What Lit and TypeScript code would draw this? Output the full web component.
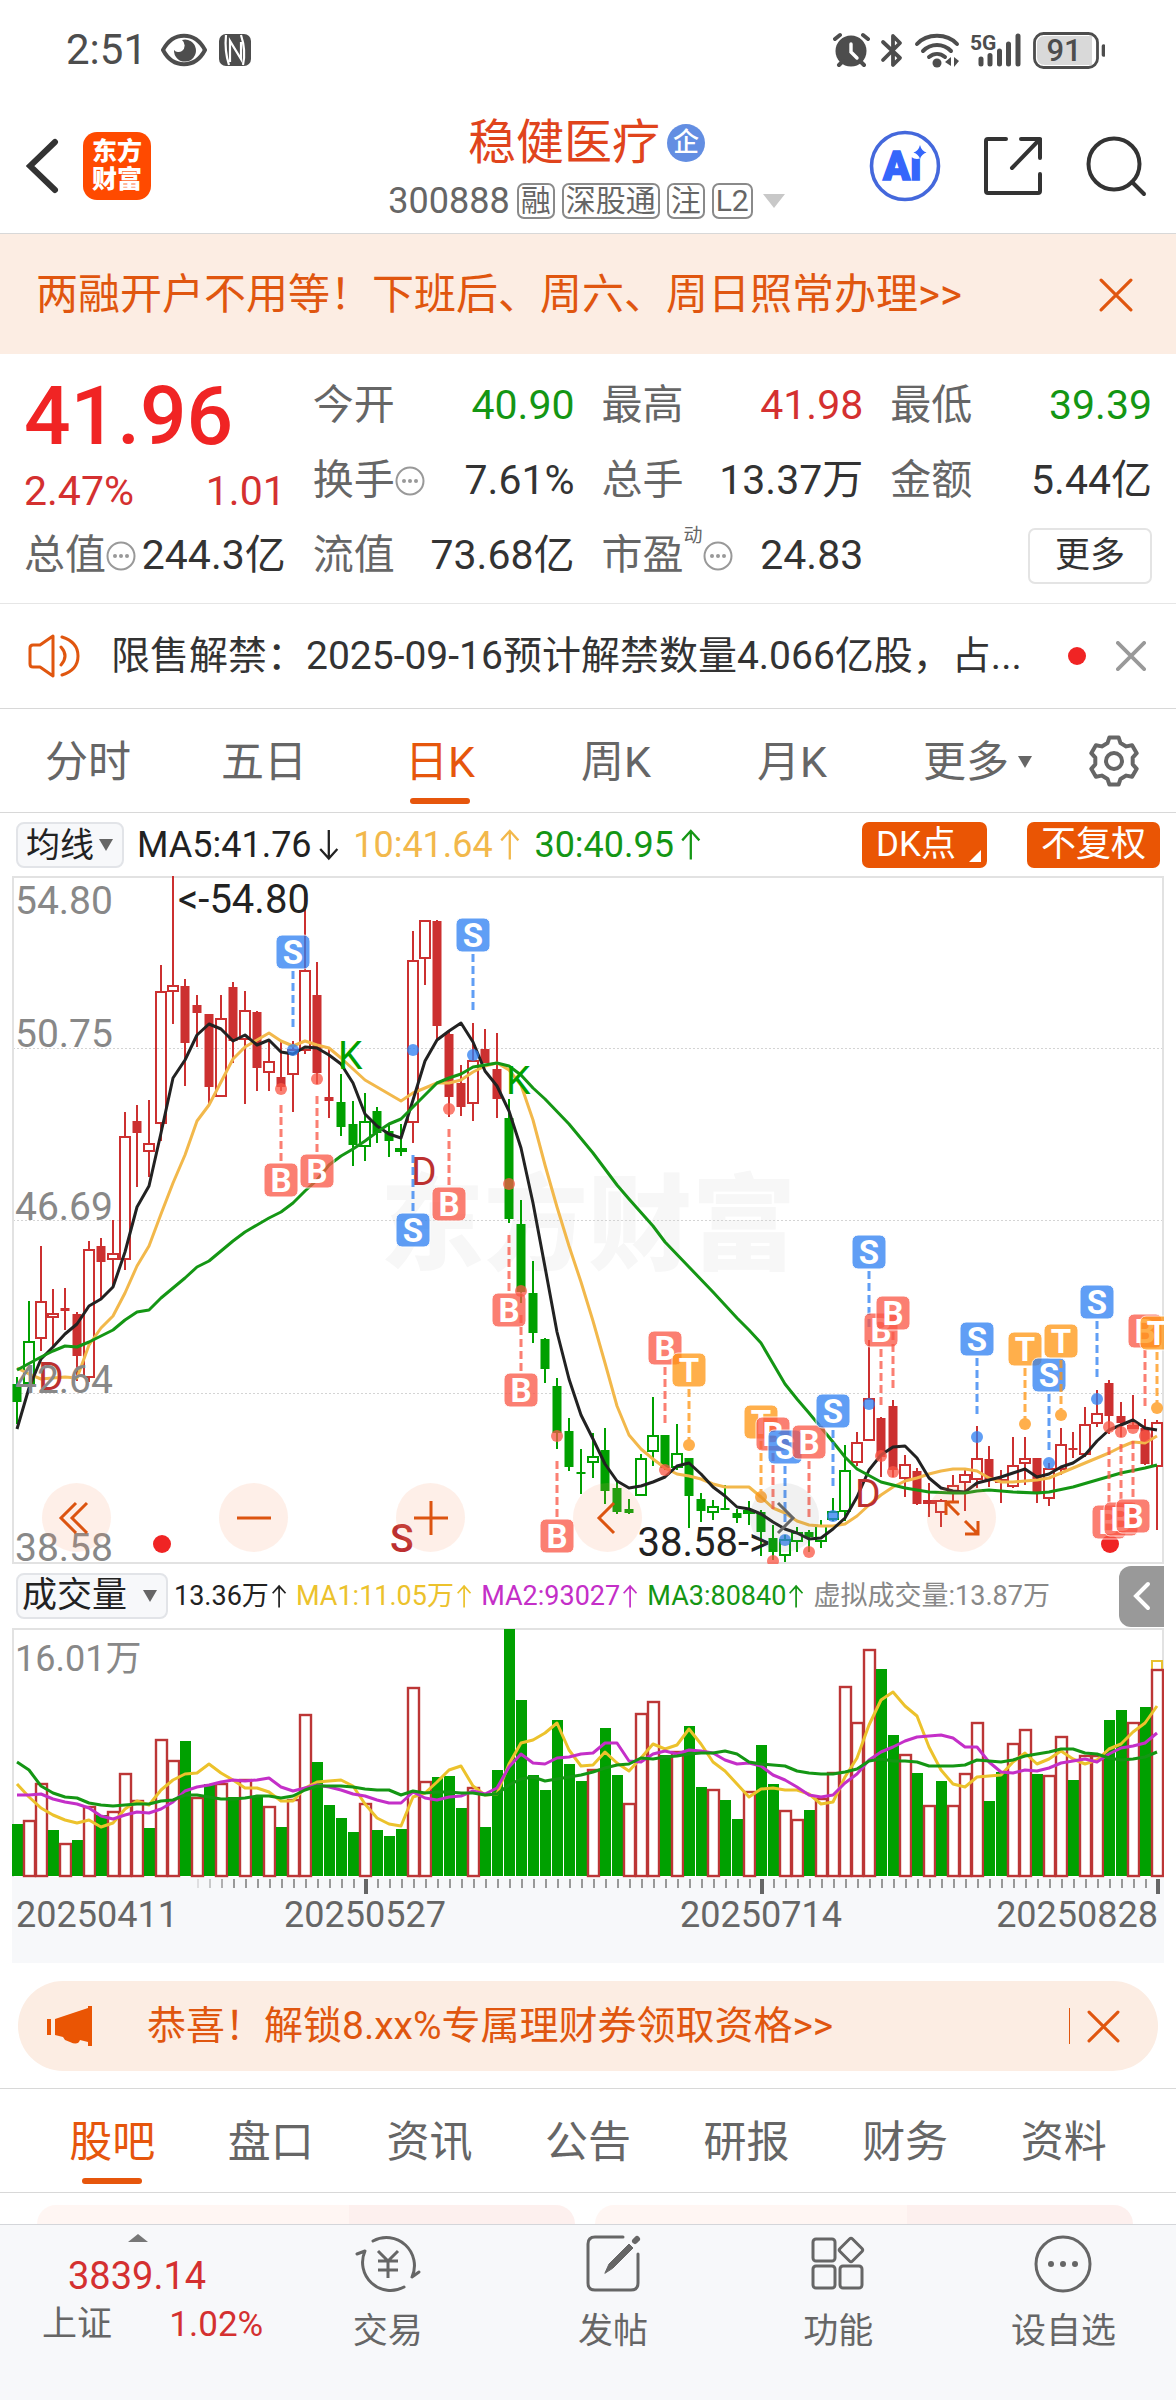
import { LitElement, html, svg, css } from "lit";
import { customElement, state } from "lit/decorators.js";
import { classMap } from "lit/directives/class-map.js";

/* ---------- data ---------- */

type Kind = "r" | "h" | "g" | "u"; // red solid, red hollow, green solid, green hollow
type Candle = [Kind, number, number, number, number]; // kind, high, top, bottom, low

const CANDLES: Candle[] = [
  ["g", 507, 514, 532, 554], ["u", 431, 471, 514, 514], ["h", 376, 431, 469, 481], ["h", 419, 443, 448, 476],
  ["r", 418, 438, 441, 460], ["r", 442, 444, 486, 511], ["h", 371, 379, 508, 512], ["r", 368, 376, 392, 429],
  ["h", 350, 383, 390, 415], ["h", 242, 266, 390, 400], ["r", 235, 251, 263, 317], ["h", 230, 273, 282, 307],
  ["h", 95, 121, 254, 271], ["h", 6, 115, 122, 154], ["r", 109, 116, 173, 216], ["r", 125, 135, 143, 177],
  ["r", 144, 144, 217, 234], ["h", 125, 148, 227, 227], ["r", 112, 117, 171, 193], ["h", 121, 140, 170, 234],
  ["r", 141, 142, 198, 221], ["h", 172, 191, 203, 221], ["r", 172, 207, 217, 221], ["h", 171, 179, 205, 242],
  ["h", 19, 100, 181, 184], ["r", 92, 125, 203, 214], ["r", 178, 227, 231, 248], ["g", 204, 232, 257, 266],
  ["g", 231, 254, 275, 296], ["u", 223, 251, 277, 291], ["g", 237, 241, 263, 273], ["g", 254, 261, 271, 287],
  ["u", 254, 278, 282, 286], ["h", 61, 90, 253, 273], ["h", 50, 50, 89, 115], ["r", 50, 51, 156, 169],
  ["r", 161, 164, 227, 247], ["r", 195, 213, 237, 246], ["h", 153, 190, 234, 251], ["r", 159, 179, 193, 193],
  ["r", 163, 199, 229, 248], ["g", 229, 248, 349, 353], ["g", 330, 354, 422, 433], ["g", 391, 423, 463, 473],
  ["g", 468, 469, 499, 513], ["g", 508, 516, 563, 579], ["g", 548, 561, 597, 601], ["g", 579, 602, 604, 624],
  ["u", 563, 586, 593, 608], ["g", 558, 580, 621, 634], ["g", 612, 618, 642, 644], ["g", 629, 639, 643, 644],
  ["u", 584, 588, 626, 626], ["u", 527, 565, 582, 596], ["g", 565, 565, 598, 600], ["u", 554, 583, 598, 600],
  ["g", 588, 588, 626, 658], ["g", 623, 629, 641, 652], ["u", 630, 636, 643, 650], ["g", 615, 638, 640, 640],
  ["g", 639, 643, 648, 653], ["u", 631, 640, 643, 655], ["g", 640, 642, 662, 686], ["g", 655, 668, 682, 690],
  ["u", 665, 669, 686, 692], ["u", 657, 662, 672, 682], ["g", 660, 662, 667, 682], ["u", 650, 655, 672, 678],
  ["u", 628, 641, 650, 651], ["u", 575, 600, 642, 651], ["h", 562, 572, 593, 596], ["h", 470, 528, 571, 571],
  ["r", 547, 548, 587, 607], ["r", 530, 536, 600, 607], ["h", 585, 594, 609, 627], ["r", 598, 601, 634, 635],
  ["h", 613, 630, 634, 647], ["h", 629, 630, 643, 657], ["h", 605, 615, 622, 632], ["h", 598, 604, 613, 641],
  ["h", 556, 588, 610, 618], ["r", 576, 589, 610, 617], ["h", 600, 609, 612, 633], ["h", 567, 595, 617, 618],
  ["h", 567, 588, 594, 615], ["r", 588, 588, 623, 633], ["h", 593, 598, 629, 636], ["h", 558, 574, 600, 605],
  ["r", 562, 578, 580, 588], ["h", 537, 554, 585, 587], ["h", 520, 543, 554, 557], ["r", 510, 513, 546, 564],
  ["r", 532, 546, 553, 567], ["h", 525, 555, 557, 558], ["r", 549, 558, 594, 595], ["h", 550, 552, 597, 660],
];

const MA5 = [
  559, 518, 489, 477, 464, 454, 436, 429, 417, 382, 337, 316, 263, 208, 190, 165, 154, 159, 171, 165, 175, 170, 182,
  184, 177, 178, 185, 194, 213, 244, 256, 264, 268, 230, 191, 170, 161, 153, 172, 201, 216, 241, 278, 333, 397, 462,
  509, 545, 569, 594, 611, 618, 616, 612, 607, 596, 593, 604, 617, 626, 637, 639, 644, 652, 659, 663, 669, 668, 659,
  648, 627, 600, 585, 577, 576, 588, 608, 618, 621, 622, 613, 610, 607, 603, 599, 607, 604, 597, 593, 585, 571, 560,
  555, 550, 558, 560,
];
const MA10 = [
  498, 504, 509, 508, 507, 508, 475, 458, 446, 423, 396, 376, 344, 313, 285, 251, 235, 212, 189, 177, 170, 163, 171,
  176, 171, 175, 178, 188, 199, 210, 217, 224, 231, 223, 218, 213, 213, 210, 202, 196, 193, 200, 215, 250, 295, 337,
  376, 412, 451, 493, 536, 565, 579, 589, 598, 604, 606, 609, 614, 617, 617, 617, 627, 638, 643, 651, 655, 656, 656,
  654, 646, 635, 625, 617, 611, 608, 604, 601, 599, 599, 601, 608, 612, 612, 611, 610, 608, 603, 598, 593, 588, 583,
  577, 572, 573, 566,
];
const MA30: [number, number][] = [
  [0, 500], [2, 487], [3, 481], [4, 476], [5, 477], [6, 472], [8, 460], [9, 450], [10, 442], [11, 440], [12, 428],
  [14, 408], [15, 397], [16, 391], [18, 371], [19, 362], [20, 355], [21, 348], [22, 342], [23, 333], [24, 321],
  [25, 310], [26, 295], [27, 286], [28, 279], [29, 271], [30, 262], [31, 254], [32, 249], [33, 237], [34, 225],
  [35, 213], [36, 208], [37, 204], [38, 197], [39, 195], [40, 193], [41, 196], [42, 205], [43, 218], [44, 229],
  [46, 254], [48, 283], [50, 315], [51, 329], [53, 356], [54, 372], [56, 397], [58, 422], [60, 448], [61, 460],
  [62, 473], [64, 514], [65, 529], [66, 543], [68, 572], [69, 587], [70, 599], [72, 612], [74, 618], [76, 622],
  [78, 623], [79, 623], [80, 621], [81, 620], [83, 622], [85, 623], [86, 622], [88, 617], [90, 610], [92, 603],
  [94, 598], [95, 595],
];

type Signal = ["B" | "S" | "T", number, number, number]; // letter, day, badge y, dot y
const SIGNALS: Signal[] = [
  ["S", 23, 82, 180], ["B", 22, 310, 219], ["B", 25, 301, 209], ["S", 33, 360, 180], ["S", 38, 65, 185],
  ["B", 36, 334, 239], ["B", 41, 440, 314], ["B", 42, 520, 421], ["B", 45, 666, 566], ["B", 54, 478, 600],
  ["T", 56, 500, 575], ["T", 62, 552, 627], ["B", 63, 564, 691], ["S", 64, 577, 670], ["B", 66, 572, 682],
  ["S", 68, 541, 646], ["S", 71, 382, 534], ["B", 72, 460, 586], ["B", 73, 443, 602], ["S", 80, 469, 567],
  ["T", 84, 479, 554], ["S", 86, 505, 593], ["T", 87, 471, 545], ["S", 90, 432, 529], ["B", 91, 652, 557],
  ["B", 92, 649, 562], ["B", 93, 646, 558], ["B", 94, 461, 566], ["T", 95, 463, 538],
];

const VOLUMES = [
  53, 57, 94, 47, 34, 37, 71, 62, 66, 104, 77, 49, 138, 117, 136, 80, 93, 94, 80, 98, 81, 71, 50, 78, 163, 115, 72,
  59, 45, 74, 47, 41, 48, 190, 96, 100, 101, 69, 90, 50, 107, 248, 177, 102, 87, 157, 113, 96, 108, 149, 102, 74,
  164, 176, 122, 126, 151, 90, 88, 77, 58, 86, 132, 93, 67, 58, 67, 79, 105, 191, 155, 228, 208, 142, 123, 104, 72,
  96, 72, 104, 155, 76, 105, 134, 148, 103, 102, 141, 97, 122, 122, 157, 167, 155, 170, 208,
];
const VOLUME_UP = new Set([
  1, 2, 4, 6, 8, 9, 10, 12, 13, 15, 17, 19, 21, 23, 24, 29, 33, 34, 38, 48, 51, 52, 53, 55, 58, 61, 64, 65, 67, 68,
  69, 70, 71, 74, 76, 78, 79, 80, 83, 84, 86, 87, 89, 90, 93, 95,
]);

/* ---------- helpers ---------- */

const dayX = (i: number) => 17 + 12 * i;

const linePoints = (ys: number[]) => ys.map((y, i) => `${dayX(i)},${y}`).join(" ");

/** Moving average whose first values come from days before the visible range. */
function average(values: number[], span: number, seed: number[]): number[] {
  return values.map((_, i) =>
    i < span - 1 ? seed[i] : values.slice(i - span + 1, i + 1).reduce((a, b) => a + b, 0) / span,
  );
}

function gearPath(): string {
  const pts: string[] = [];
  for (let t = 0; t < 6; t++) {
    const steps: [number, number][] = [[-20, 19], [-11, 24], [11, 24], [20, 19]];
    for (const [da, r] of steps) {
      const a = ((t * 60 - 90 + da) * Math.PI) / 180;
      pts.push(`${(28 + r * Math.cos(a)).toFixed(1)} ${(28 + r * Math.sin(a)).toFixed(1)}`);
    }
  }
  return `M${pts.join("L")}Z`;
}

const cross = (size: number, width: number) => html`<svg width=${size} height=${size} viewBox="0 0 32 32" fill="none"
  stroke="currentColor" stroke-width=${width} stroke-linecap="round" aria-hidden="true"><path d="M2 2 30 30M30 2 2 30"/></svg>`;
const info = html`<svg width="30" height="30" viewBox="0 0 30 30" aria-hidden="true"><circle cx="15" cy="15" r="13.5"
  fill="none" stroke="#999" stroke-width="2"/><g fill="#999"><circle cx="9" cy="15" r="2"/><circle cx="15" cy="15" r="2"/><circle
  cx="21" cy="15" r="2"/></g></svg>`;
const caret = html`<svg width="16" height="14" viewBox="0 0 16 14" aria-hidden="true"><path d="M1 1h14L8 13Z" fill="#666"/></svg>`;
const arrow = (down = false) => html`<svg class="arrow" viewBox="0 0 22 34" fill="none" stroke="currentColor"
  stroke-width="2.4" role="img" aria-label=${down ? "下降" : "上升"}><path d=${
  down ? "M11 2V32M2 22 11 32 20 22" : "M11 33V3M2 13 11 3 20 13"}/></svg>`;

const base = css`
  * { box-sizing: border-box; }
  button, select { font: inherit; color: inherit; background: none; border: 0; padding: 0; margin: 0; cursor: pointer; }
  a { color: inherit; text-decoration: none; }
  svg { display: block; flex: none; }
`;

/* ---------- price chart ---------- */

@customElement("price-chart")
export class PriceChart extends LitElement {
  static styles = [base, css`
    :host { display: block; position: relative; }
    .plot { width: 100%; height: auto; }
    .controls { position: absolute; left: 30px; bottom: 12px; display: flex; gap: 108px; }
    .ctl { width: 69px; height: 69px; border-radius: 50%; background: rgba(250, 150, 100, 0.15); color: #dc5410;
      display: grid; place-items: center; }
    .ctl.off { background: rgba(120, 120, 120, 0.1); color: #666; }
    text { font-family: Roboto, "Noto Sans CJK SC", sans-serif; }
    .axis { fill: #888; font-size: 39px; }
    .note { fill: #222; font-size: 40px; }
    .mark { font-size: 39px; }
    .badge { fill: #fff; font-size: 33px; font-weight: 700; text-anchor: middle; }
    .water { fill: #f7f7f7; font-size: 104px; font-weight: 900; }
  `];

  private candle([kind, high, top, bottom, low]: Candle, i: number) {
    const x = dayX(i);
    const color = kind === "r" || kind === "h" ? "#cc3030" : "#00a000";
    const hollow = kind === "h" || kind === "u";
    return svg`
      <path d="M${x} ${high}V${top}M${x} ${bottom}V${low}" stroke=${color} stroke-width="2"/>
      ${hollow
        ? svg`<rect x=${x - 5} y=${top + 1} width="10" height=${Math.max(bottom - top - 2, 2)} fill="none" stroke=${color} stroke-width="2"/>`
        : svg`<rect x=${x - 4.5} y=${top} width="9" height=${Math.max(bottom - top, 2)} fill=${color}/>`}`;
  }

  private signal([letter, day, y, dot]: Signal) {
    const x = dayX(day);
    const color = { B: "#fa5746", S: "#2f80f2", T: "#ff9614" }[letter];
    const dir = dot > y ? 1 : -1;
    return svg`<g opacity="0.76">
      <path d="M${x} ${y + 19 * dir}V${y + 75 * dir}" stroke=${color} stroke-width="3" stroke-dasharray="8 4"/>
      <circle cx=${x} cy=${dot} r="6" fill=${color}/>
      <rect x=${x - 17} y=${y - 17} width="34" height="34" rx="6" fill=${color} stroke="#fff"/>
      </g><text class="badge" x=${x} y=${y + 12}>${letter}</text>`;
  }

  render() {
    const rows: [string, number][] = [["54.80", 44], ["50.75", 177], ["46.69", 350], ["42.64", 523], ["38.58", 691]];
    const ctl = (label: string, d: string, off = false) => html`<button class=${classMap({ ctl: true, off })}
      aria-label=${label}><svg width="40" height="40" viewBox="0 0 40 40" fill="none" stroke="currentColor"
      stroke-width="3"><path d=${d}/></svg></button>`;
    return html`
      <svg class="plot" viewBox="12 6 1152 688" role="img" aria-label="日K线图">
        <text class="water" x="380" y="392">东方财富</text>
        <g stroke="#d4d4d4" stroke-dasharray="2 2">
          <path d="M13 178.5H1163M13 350.5H1163M13 523.5H1163"/>
        </g>
        <rect x="13" y="7" width="1150" height="686" fill="none" stroke="#e2e2e2" stroke-width="2"/>
        ${CANDLES.map((c, i) => this.candle(c, i))}
        <g fill="none" stroke-width="3" stroke-linejoin="round">
          <polyline points=${linePoints(MA10)} stroke="#f2b84b"/>
          <polyline points=${linePoints(MA5)} stroke="#222"/>
          <polyline points=${MA30.map(([i, y]) => `${dayX(i)},${y}`).join(" ")} stroke="#149614"/>
        </g>
        <g class="mark" fill="#00a000"><text x="338" y="199">K</text><text x="506" y="224">K</text></g>
        <g class="mark" fill="#bc3030">
          <text x="38" y="520">D</text><text x="411" y="315">D</text><text x="855" y="637">D</text>
          <text x="390" y="682" font-weight="500">S</text>
        </g>
        ${rows.map(([t, y]) => svg`<text class="axis" x="15" y=${y}>${t}</text>`)}
        <text class="note" x="178" y="43">&lt;-54.80</text>
        <text class="note" x="770" y="686" text-anchor="end">38.58-&gt;</text>
        <g fill="#f02424"><circle cx="162" cy="674" r="9"/><circle cx="1110" cy="674" r="9"/></g>
        ${SIGNALS.map((s) => this.signal(s))}
      </svg>
      <div class="controls">
        ${ctl("快退", "M19 5 4 20 19 35M30 5 15 20 30 35")}
        ${ctl("缩小", "M3 20H37")}
        ${ctl("放大", "M3 20H37M20 3V37")}
        ${ctl("左移", "M26 5 11 20 26 35")}
        ${ctl("右移", "M13 5 28 20 13 35", true)}
        ${ctl("全屏", "M4 17V4H17M4 4 17 17M36 23V36H23M36 36 23 23")}
      </div>`;
  }
}

/* ---------- volume chart ---------- */

@customElement("volume-chart")
export class VolumeChart extends LitElement {
  static styles = [base, css`
    :host { display: block; }
    .plot { width: 100%; height: auto; }
    text { font-family: Roboto, "Noto Sans CJK SC", sans-serif; font-size: 36px; }
    .max { fill: #888; }
    .date { fill: #666; }
  `];

  render() {
    const floor = 317;
    const toLine = (v: number[]) => linePoints(v.map((h) => Math.round(floor - h)));
    const ma5 = average(VOLUMES, 5, [93, 80, 69, 62]);
    const ma10 = average(VOLUMES, 10, [82, 82, 83, 78, 75, 73, 69, 61, 58]);
    const ma20 = average(VOLUMES, 20, [115, 107, 91, 84, 80, 79, 74, 72, 71, 72, 73, 73, 76, 77, 82, 82, 80, 78, 78]);
    const major = new Set([29, 62, 95]);
    return html`<svg class="plot" viewBox="12 68 1152 335" role="img" aria-label="成交量图">
      <rect x="12" y="317" width="1152" height="86" fill="#f7f8fa"/>
      <path d="M13 317V69H1163V317" fill="none" stroke="#e2e2e2" stroke-width="2"/>
      <rect x="1152" y="101" width="10" height="10" fill="none" stroke="#e8c12e" stroke-width="2"/>
      ${VOLUMES.map((h, i) => VOLUME_UP.has(i)
        ? svg`<rect x=${dayX(i) - 5} y=${floor - h + 1} width="11" height=${h - 2} fill="#fff" stroke="#bc3636" stroke-width="2.400"/>`
        : svg`<rect x=${dayX(i) - 5} y=${floor - h} width="11" height=${h - 1} fill="#00a000"/>`)}
      <g fill="none" stroke-width="3" stroke-linejoin="round">
        <polyline points=${toLine(ma5)} stroke="#ecc22c"/>
        <polyline points=${toLine(ma10)} stroke="#c42fc8"/>
        <polyline points=${toLine(ma20)} stroke="#149614"/>
      </g>
      ${VOLUMES.map((_, i) => i < 15 ? "" : svg`<path d="M${dayX(i) + 1} 319V${major.has(i) ? 334 : 328}"
        stroke=${major.has(i) ? "#666" : "#999"} stroke-width=${major.has(i) ? 4 : 2} opacity=${Math.min(1, (i - 14) / 4)}/>`)}
      <text class="max" x="15" y="111">16.01万</text>
      <g class="date">
        <text x="16" y="367">20250411</text>
        <text x="365" y="367" text-anchor="middle">20250527</text>
        <text x="761" y="367" text-anchor="middle">20250714</text>
        <text x="1158" y="367" text-anchor="end">20250828</text>
      </g>
    </svg>`;
  }
}

/* ---------- page ---------- */

@customElement("app-root")
export class AppRoot extends LitElement {
  static styles = [base, css`
    :host { display: flex; flex-direction: column; min-height: 100vh; background: #fff; color: #333;
      font-family: Roboto, "Noto Sans CJK SC", sans-serif; font-size: 40px; line-height: 1; }
    .grow { flex: 1; }

    .status { height: 99px; padding: 0 71px 0 66px; display: flex; align-items: center; color: #4d4d4d; font-size: 42px; }
    .status .time { margin-right: 14px; }
    .status .nfc { margin-left: 12px; }

    .top { height: 135px; border-bottom: 1px solid #d8d8d8; display: grid; grid-template-columns: 1fr auto 1fr;
      align-items: center; padding: 0 29px 0 26px; color: #333; }
    .left { display: flex; align-items: center; gap: 24px; }
    .right { display: flex; align-items: center; gap: 42px; justify-content: flex-end; }
    .logo { width: 68px; height: 68px; border-radius: 14px; background: #ff4a00; color: #fff; font-size: 25px;
      line-height: 28px; font-weight: 900; text-align: center; padding-top: 6px; }
    .title { display: flex; flex-direction: column; align-items: center; gap: 14px; padding-top: 4px; }
    .name { margin: 0; display: flex; align-items: center; gap: 7px; font-size: 48px; line-height: 52px; font-weight: 400; color: #e0441c; }
    .corp { width: 38px; height: 38px; border-radius: 50%; background: #638ee2; color: #fff; font-size: 26px; line-height: 36px;
      text-align: center; font-weight: 500; }
    .code { display: flex; align-items: center; gap: 7px; font-size: 36px; line-height: 36px; color: #666; }
    .tag { border: 2px solid #8a8a8a; border-radius: 7px; height: 36px; padding: 0 2px; font-size: 30px; line-height: 31px; }
    .code svg { margin-left: 3px; }

    .banner { height: 120px; background: #fcede3; color: #e0560f; display: flex; align-items: center;
      justify-content: space-between; padding: 2px 43px 0 36px; font-size: 42px; }

    .quote { display: grid; grid-template-columns: repeat(4, 1fr); grid-auto-rows: 75px; column-gap: 27px;
      padding: 14px 24px 10px; border-bottom: 1px solid #e6e6e6; font-size: 41px; }
    .last { grid-row: span 2; color: #f02424; }
    .price { font-size: 82px; line-height: 96px; font-weight: 500; }
    .delta { display: flex; justify-content: space-between; line-height: 54px; color: #d43030; }
    .cell { display: flex; align-items: center; white-space: nowrap; }
    .cell .label { color: #666; }
    .cell .value { margin-left: auto; }
    .cell sup { font-size: 19px; line-height: 19px; align-self: flex-start; color: #666; margin-top: 8px; }
    .up { color: #d43030; }
    .down { color: #149614; }
    .more { margin-left: auto; width: 124px; height: 56px; border: 2px solid #e4e4e4; border-radius: 7px; font-size: 35px; }

    .notice { height: 105px; display: flex; align-items: center; padding: 0 30px 0 28px; border-bottom: 1px solid #d8d8d8; font-size: 39px; }
    .notice .text { flex: 1; margin-left: 31px; white-space: nowrap; overflow: hidden; line-height: 60px; }
    .dot { width: 18px; height: 18px; border-radius: 50%; background: #f02424; margin-right: 30px; }
    .gray { color: #999; }

    .periods { height: 104px; display: grid; grid-template-columns: repeat(5, 176fr) 196fr 100fr;
      border-bottom: 1px solid #d8d8d8; color: #666; font-size: 43px; }
    .tab { position: relative; display: flex; align-items: center; justify-content: center; gap: 8px; padding-top: 3px; }
    .tab.on { color: #e6560c; }
    .tab.on::after { content: ""; position: absolute; bottom: 8px; left: calc(50% - 30px); width: 60px; height: 6px;
      border-radius: 3px; background: #e6560c; }
    .gear { display: flex; align-items: center; justify-content: center; padding-right: 24px; color: #666; }

    .charts { padding: 0 12px; }
    .bar { height: 63px; display: flex; align-items: center; white-space: nowrap; }
    .pick { display: flex; align-items: center; height: 46px; padding: 0 8px; border: 2px solid #e2e4e8; border-radius: 8px;
      background: #f7f8fa; color: #222; font-size: 34px; margin-left: 4px; gap: 4px; }
    .pick select { appearance: none; outline: none; line-height: 40px; height: 42px; }
    .ma { display: flex; align-items: center; gap: 14px; margin-left: 13px; font-size: 36px; color: #222; }
    .ma span { display: flex; align-items: center; gap: 6px; }
    .arrow { height: 0.9em; width: 0.6em; }
    .y { color: #f2b84b; } .g { color: #149614; } .v { color: #c42fc8; } .y2 { color: #ecc22c; } .k { color: #888; }
    .chip { position: relative; height: 46px; border-radius: 7px; background: #ea5504; color: #fff; font-size: 35px; padding: 0 14px; margin-left: auto; }
    .chip.dk { padding-right: 31px; }
    .chip.dk::after { content: ""; position: absolute; right: 6px; bottom: 6px; border: 6px solid; border-color: transparent #fff #fff transparent; }
    .chip.adj { margin: 0 4px 0 40px; }
    .vol { height: 64px; }
    .vol .pick { gap: 14px; padding-left: 4px; font-size: 35px; }
    .vol .ma { margin-left: 6px; gap: 9px; font-size: 27px; }
    .vol .ma span { gap: 2px; }
    .fold { margin-left: auto; width: 45px; height: 61px; border-radius: 12px 0 0 12px; background: #999; color: #fff;
      display: grid; place-items: center; }

    .pill { margin: 18px 18px 17px; height: 90px; border-radius: 45px; background: #fcede3; color: #e0560f; display: flex;
      align-items: center; padding: 0 38px 0 28px; font-size: 39px; }
    .pill a { margin-left: 53px; flex: 1; }
    .rule { width: 1px; height: 36px; background: #e0560f; margin-right: 17px; }

    .sections { height: 105px; padding: 0 33px; display: grid; grid-template-columns: repeat(7, 1fr); border: solid #d8d8d8;
      border-width: 1px 0; color: #666; font-size: 43px; }

    .peek { display: grid; grid-template-columns: 1fr 1fr; gap: 20px; padding: 12px 43px 0 37px; }
    .card { height: 19px; border-radius: 24px 24px 0 0; background: linear-gradient(90deg, #fff6f3 58%, #fdf0ee 58%); }

    .nav { flex: 1; background: #f7f8fa; border-top: 1px solid #d4d6da; display: grid;
      grid-template-columns: 275fr repeat(4, 225fr); color: #666; font-size: 35px; }
    .nav button { display: flex; flex-direction: column; align-items: center; padding-top: 9px; gap: 20px; }
    .nav .index { padding: 9px 12px 0 42px; gap: 0; align-items: stretch; color: #d43030; }
    .index svg { margin-left: 86px; }
    .index strong { font-weight: 400; font-size: 38px; line-height: 38px; margin: 15px 0 0 26px; text-align: left; }
    .index span { display: flex; justify-content: space-between; align-items: center; margin-top: 10px; line-height: 40px; }
    .index em { font-style: normal; color: #666; }
  `];

  @state() private period = "日K";
  @state() private section = "股吧";

  private statusBar() {
    return html`<div class="status">
      <span class="time">2:51</span>
      <svg width="46" height="34" viewBox="0 0 46 34" fill="none"><path d="M2 17C12-2 34-2 44 17 34 36 12 36 2 17Z"
        stroke="#4d4d4d" stroke-width="4"/><path d="M21 7A11 11 0 1 1 13 17 6 6 0 0 0 21 18 7 7 0 0 0 21 7Z" fill="#4d4d4d"/></svg>
      <svg class="nfc" width="32" height="32" viewBox="0 0 32 32"><rect width="32" height="32" rx="7" fill="#4d4d4d"/>
        <path d="M7 1C6 11 7 22 10 31M22 1C25 10 26 22 24 31M11 28V7L22 25V8" stroke="#fff" stroke-width="2.2" fill="none"/></svg>
      <span class="grow"></span>
      <svg width="272" height="40" viewBox="832 29 272 40" fill="none" stroke="#4d4d4d" stroke-linecap="round" role="img" aria-label="5G 91%">
        <circle cx="850" cy="50" r="15.5" fill="#4d4d4d" stroke="none"/>
        <path d="M834 38 839 34M867 38 862 34M838 64 842 60M863 64 859 60" stroke-width="4"/>
        <path d="M850 43V51L856 57" stroke="#fff" stroke-width="3.4"/>
        <path d="M882 41 899 57 892 64V35L899 42 882 59" stroke-width="3.8" stroke-linejoin="round"/>
        <path d="M916 43C926 32 946 32 956 43M922 50C930 42 942 42 950 50M928 56C933 52 939 52 944 56" stroke-width="4"/>
        <circle cx="936" cy="62" r="4.5" fill="#4d4d4d" stroke="none"/>
        <path d="M944 61 950 56V65ZM953 56V66L958 60Z" fill="#4d4d4d" stroke="none"/>
        <path d="M980 58V63M989 54.500V63M998.500 50V63M1007.500 43V63M1017 35V63" stroke-width="5"/>
        <text x="969" y="49" fill="#4d4d4d" stroke="none" font-family="Roboto, sans-serif" font-size="21" font-weight="700">5G</text>
        <rect x="1033.500" y="32.500" width="63" height="34" rx="9" stroke-width="2.800"/>
        <path d="M1044 35H1091V64H1044Q1036 64 1036 56V43Q1036 35 1044 35Z" fill="#d9d9d9" stroke="none"/>
        <path d="M1102.500 45V54" stroke-width="3.600"/>
        <text x="1063" y="60" fill="#4d4d4d" stroke="none" text-anchor="middle" font-family="Roboto, sans-serif" font-size="31" font-weight="500">91</text>
      </svg>
    </div>`;
  }

  private header() {
    return html`<header class="top">
      <div class="left">
        <button aria-label="返回"><svg width="33" height="56" viewBox="0 0 33 56" fill="none" stroke="currentColor"
          stroke-width="6" stroke-linecap="round"><path d="M29 4 4 28 29 52"/></svg></button>
        <div class="logo">东方<br>财富</div>
      </div>
      <div class="title">
        <h1 class="name">稳健医疗<span class="corp">企</span></h1>
        <div class="code">300888<span class="tag">融</span><span class="tag">深股通</span><span class="tag">注</span><span
          class="tag">L2</span><svg width="22" height="14" viewBox="0 0 22 14"><path d="M0 0H22L11 14Z" fill="#c8c8c8"/></svg></div>
      </div>
      <div class="right">
        <button aria-label="AI 助手"><svg width="72" height="72" viewBox="0 0 72 72">
          <circle cx="36" cy="36" r="33.500" fill="none" stroke="#4468dc" stroke-width="3.600"/>
          <text x="14" y="50" fill="#3566fb" stroke="#3566fb" stroke-width="1.500" font-family="Roboto, sans-serif" font-size="40" font-weight="900">Ai</text>
          <circle cx="48" cy="21" r="8" fill="#fff"/>
          <path d="M51 15Q52.500 21 57.500 22.500 52.500 24 51 29 49.500 24 44.500 22.500 49.500 21 51 15Z" fill="#3566fb"/></svg></button>
        <button aria-label="分享"><svg width="60" height="60" viewBox="0 0 60 60" fill="none" stroke="currentColor" stroke-width="4"
          stroke-linecap="round" stroke-linejoin="round"><path d="M23 3H5Q3 3 3 5V55Q3 57 5 57H55Q57 57 57 55V38M38 3H57V22M57 3 29 32"/></svg></button>
        <button aria-label="搜索"><svg width="62" height="62" viewBox="0 0 62 62" fill="none" stroke="currentColor" stroke-width="4"
          stroke-linecap="round"><circle cx="29" cy="29" r="25.500"/><path d="M47 47 59 59"/></svg></button>
      </div>
    </header>`;
  }

  private quote() {
    const cell = (label: string, value: string, cls = "", hint = false) =>
      html`<div class="cell"><span class="label">${label}</span>${hint ? info : ""}<span
        class="value ${cls}">${value}</span></div>`;
    return html`<section class="quote">
      <div class="last"><div class="price">41.96</div><div class="delta"><span>2.47%</span><span>1.01</span></div></div>
      ${cell("今开", "40.90", "down")} ${cell("最高", "41.98", "up")} ${cell("最低", "39.39", "down")}
      ${cell("换手", "7.61%", "", true)} ${cell("总手", "13.37万")} ${cell("金额", "5.44亿")}
      ${cell("总值", "244.3亿", "", true)} ${cell("流值", "73.68亿")}
      <div class="cell"><span class="label">市盈</span><sup>动</sup>${info}<span class="value">24.83</span></div>
      <div class="cell"><button class="more">更多</button></div>
    </section>`;
  }

  private chartArea() {
    return html`<section class="charts">
      <div class="bar">
        <label class="pick"><select aria-label="指标"><option>均线</option></select>${caret}</label>
        <div class="ma">
          <span>MA5:41.76${arrow(true)}</span><span class="y">10:41.64${arrow()}</span><span class="g">30:40.95${arrow()}</span>
        </div>
        <button class="chip dk">DK点</button><button class="chip adj">不复权</button>
      </div>
      <price-chart></price-chart>
      <div class="bar vol">
        <label class="pick"><select aria-label="副图指标"><option>成交量</option></select>${caret}</label>
        <div class="ma">
          <span>13.36万${arrow()}</span><span class="y2">MA1:11.05万${arrow()}</span><span class="v">MA2:93027${arrow()}</span><span
            class="g">MA3:80840${arrow()}</span><span class="k">虚拟成交量:13.87万</span>
        </div>
        <button class="fold" aria-label="展开"><svg width="18" height="30" viewBox="0 0 18 30" fill="none" stroke="#fff"
          stroke-width="4" stroke-linecap="round"><path d="M15 3 3 15 15 27"/></svg></button>
      </div>
      <volume-chart></volume-chart>
    </section>`;
  }

  private bottomNav() {
    const icon = (body: unknown) => html`<svg width="66" height="60" viewBox="0 0 66 60" fill="none" stroke="#666"
      stroke-width="3" stroke-linecap="round" stroke-linejoin="round" aria-hidden="true">${body}</svg>`;
    return html`<nav class="nav">
      <button class="index"><svg width="20" height="8" viewBox="0 0 20 8"><path d="M0 8 10 0 20 8Z" fill="#777"/></svg>
        <strong>3839.14</strong><span><em>上证</em>1.02%</span></button>
      <button>${icon(svg`<path d="M18 7A28 28 0 0 1 57 43L64 38M49 53A28 28 0 0 1 10 17L2 20"/>
        <path d="M23 17 33 27 43 17M33 27V44M23 27H43M23 36H43" stroke-linecap="butt"/>`)}交易</button>
      <button>${icon(svg`<path d="M43 3H15Q8 3 8 10V49Q8 56 15 56H51Q58 56 58 49V20"/>
        <path d="M25 39 29 30 49 10 53 14 33 34Z" fill="#666" stroke-width="1"/><path d="M55 7 57 5" stroke-width="6"/>`)}发帖</button>
      <button>${icon(svg`<rect x="8" y="5" width="22" height="22" rx="3"/><rect x="8" y="32" width="22" height="22" rx="3"/>
        <rect x="35" y="32" width="22" height="22" rx="3"/><path d="M44.500 5Q46 3.500 47.500 5L57 14.500Q58.500 16 57 17.500L47.500 27Q46 28.500 44.500 27L35 17.500Q33.500 16 35 14.500Z"/>`)}功能</button>
      <button>${icon(svg`<circle cx="33" cy="30" r="27"/><g fill="#666" stroke="none"><circle cx="21" cy="30" r="3"/><circle
        cx="33" cy="30" r="3"/><circle cx="45" cy="30" r="3"/></g>`)}设自选</button>
    </nav>`;
  }

  render() {
    const tab = (name: string, on: boolean, pick: () => void) =>
      html`<button class=${classMap({ tab: true, on })} @click=${pick}>${name}</button>`;
    return html`
      ${this.statusBar()} ${this.header()}
      <div class="banner"><a href="#margin">两融开户不用等！下班后、周六、周日照常办理&gt;&gt;</a>
        <button aria-label="关闭">${cross(34, 3)}</button></div>
      ${this.quote()}
      <div class="notice">
        <svg width="52" height="44" viewBox="0 0 52 44" fill="none" stroke="#e0560f" stroke-width="3" stroke-linecap="round"
          stroke-linejoin="round"><path d="M25 2 12 11H5Q2 11 2 14V30Q2 33 5 33H12L25 42ZM33 13Q41 22 33 31M34 3Q50 8 50 22T34 41"/></svg>
        <span class="text">限售解禁：2025-09-16预计解禁数量4.066亿股，占...</span>
        <span class="dot"></span><button class="gray" aria-label="关闭公告">${cross(30, 4)}</button>
      </div>
      <div class="periods">
        ${["分时", "五日", "日K", "周K", "月K"].map((p) => tab(p, p === this.period, () => (this.period = p)))}
        <button class="tab">更多${caret}</button>
        <button class="gear" aria-label="设置"><svg width="56" height="56" viewBox="0 0 56 56" fill="none" stroke="currentColor"
          stroke-width="4" stroke-linejoin="round"><path d=${gearPath()}/><circle cx="28" cy="28" r="8"/></svg></button>
      </div>
      ${this.chartArea()}
      <div class="pill">
        <svg width="48" height="40" viewBox="0 0 48 40" fill="#ea5504" aria-hidden="true"><path d="M1 13H5V29H1ZM9 13 42 2V0H46V40H42V36
          L34 34Q32 40 24 36L19 34 17 31 9 29Z"/></svg>
        <a href="#coupon">恭喜！解锁8.xx%专属理财券领取资格&gt;&gt;</a>
        <span class="rule"></span><button aria-label="关闭活动">${cross(33, 3)}</button>
      </div>
      <div class="sections">
        ${["股吧", "盘口", "资讯", "公告", "研报", "财务", "资料"].map((s) => tab(s, s === this.section, () => (this.section = s)))}
      </div>
      <div class="peek"><div class="card"></div><div class="card"></div></div>
      ${this.bottomNav()}`;
  }
}
